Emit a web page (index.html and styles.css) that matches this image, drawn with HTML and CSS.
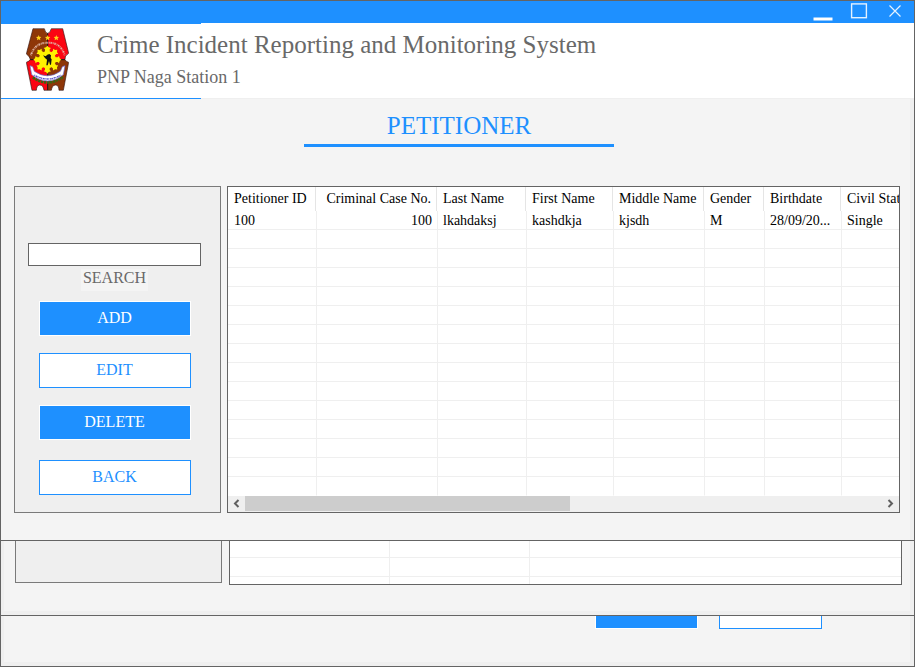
FILE: index.html
```html
<!DOCTYPE html>
<html lang="en">
<head>
<meta charset="utf-8">
<meta name="viewport" content="width=device-width, initial-scale=1">
<title>Crime Incident Reporting and Monitoring System</title>
<link rel="stylesheet" href="styles.css">
</head>
<body>
<div class="window">
  <div class="titlebar">
    <button class="caption" type="button" aria-label="Minimize"><svg width="20" height="20" viewBox="0 0 20 20"><path d="M0.5 18h19" stroke="#fff" stroke-width="3"/></svg></button>
    <button class="caption" type="button" aria-label="Maximize"><svg width="20" height="20" viewBox="0 0 20 20"><rect x="2.6" y="2.9" width="14.8" height="13.8" fill="none" stroke="#e4f2ff" stroke-width="1.4"/></svg></button>
    <button class="caption" type="button" aria-label="Close"><svg width="20" height="20" viewBox="0 0 20 20"><path d="M4.5 4.5l11 11m0-11l-11 11" stroke="#e4f2ff" stroke-width="1.2"/></svg></button>
  </div>

  <header class="header">
    <div class="brand">
      <svg class="logo" viewBox="80 85 129 189" aria-hidden="true">
        <defs>
          <clipPath id="shield"><path d="M101 87H135Q138 101 145 101T156 87H190L208 161Q195 168 197 180Q201 187 208 188L192 272H179Q179 256 168 256Q158 257 156 272H134Q132 256 121 256Q112 257 111 272H98L81 188Q91 185 93 179Q91 169 81 163Z"/></clipPath>
        </defs>
        <g clip-path="url(#shield)">
          <path fill="#8e3608" d="M80 85h65v95H80zM145 180h65v95h-65z"/>
          <path fill="#fb0512" d="M145 85h65v95h-65zM80 180h65v95H80z"/>
          <path d="M145 85v190M80 180h130" stroke="#111" stroke-width="3"/>
          <path d="M101 233Q144 263 190 232" fill="none" stroke="#3b6512" stroke-width="9" stroke-dasharray="7 2"/>
        </g>
        <path d="M101 87H135Q138 101 145 101T156 87H190L208 161Q195 168 197 180Q201 187 208 188L192 272H179Q179 256 168 256Q158 257 156 272H134Q132 256 121 256Q112 257 111 272H98L81 188Q91 185 93 179Q91 169 81 163Z" fill="none" stroke="#3a1712" stroke-width="2"/>
        <path d="M95 167Q105 130 145 129T196 167" fill="none" stroke="#e0b8aa" stroke-width="6" stroke-dasharray="2 2 4 1 1 2"/>
        <g fill="#ffd31a">
          <path id="star" d="M118 106l2 5 6 1-4 4 1 6-5-3-5 3 1-6-4-4 6-1z"/>
          <use href="#star" x="27"/><use href="#star" x="53"/>
        </g>
        <g fill="#fff200">
          <g id="rays"><path id="ray" d="M136 181L137 149L133 145L140 143L144 138L148 143L155 145L151 149L152 181Z"/><use href="#ray" transform="rotate(90 144 180)"/><use href="#ray" transform="rotate(180 144 180)"/><use href="#ray" transform="rotate(270 144 180)"/></g>
          <use href="#rays" transform="rotate(45 144 180)"/>
        </g>
        <circle cx="144" cy="180" r="26" fill="#fff200"/>
        <path d="M144 165l6-2 5 4-1 8 3 4-2 16h-3l-3-11-4 13h-4l2-17-6-5-6-8 8 3z" fill="#111"/>
        <path d="M92 198l8 3 5 14q39 27 78 0l6-14 8-3-5 27q-47 38-95 0z" fill="#fff" stroke="#6664d0" stroke-width="2"/>
        <path d="M105 226q41 24 79 0" fill="none" stroke="#5552c8" stroke-width="4" stroke-dasharray="3 2 5 1"/>
      </svg>
    </div>
    <div class="titles">
      <h1 class="title">Crime Incident Reporting and Monitoring System</h1>
      <p class="station">PNP Naga Station 1</p>
    </div>
  </header>

  <main class="page">
    <h2 class="heading">PETITIONER</h2>
    <div class="content">
      <form class="panel">
        <input class="search" id="search" type="text">
        <label class="search-label" for="search">SEARCH</label>
        <div class="actions">
          <button class="btn btn-solid" type="button">ADD</button>
          <button class="btn" type="button">EDIT</button>
          <button class="btn btn-solid" type="button">DELETE</button>
        </div>
        <button class="btn btn-back" type="button">BACK</button>
      </form>

      <div class="list">
        <table class="grid">
          <colgroup><col class="c-id"><col class="c-case"><col class="c-last"><col class="c-first"><col class="c-middle"><col class="c-gender"><col class="c-birth"><col></colgroup>
          <thead>
            <tr><th>Petitioner ID</th><th class="num">Criminal Case No.</th><th>Last Name</th><th>First Name</th><th>Middle Name</th><th>Gender</th><th>Birthdate</th><th>Civil Status</th></tr>
          </thead>
          <tbody>
            <tr><td>100</td><td class="num">100</td><td>lkahdaksj</td><td>kashdkja</td><td>kjsdh</td><td>M</td><td>28/09/20...</td><td>Single</td></tr>
            <tr><td></td><td></td><td></td><td></td><td></td><td></td><td></td><td></td></tr>
            <tr><td></td><td></td><td></td><td></td><td></td><td></td><td></td><td></td></tr>
            <tr><td></td><td></td><td></td><td></td><td></td><td></td><td></td><td></td></tr>
            <tr><td></td><td></td><td></td><td></td><td></td><td></td><td></td><td></td></tr>
            <tr><td></td><td></td><td></td><td></td><td></td><td></td><td></td><td></td></tr>
            <tr><td></td><td></td><td></td><td></td><td></td><td></td><td></td><td></td></tr>
            <tr><td></td><td></td><td></td><td></td><td></td><td></td><td></td><td></td></tr>
            <tr><td></td><td></td><td></td><td></td><td></td><td></td><td></td><td></td></tr>
            <tr><td></td><td></td><td></td><td></td><td></td><td></td><td></td><td></td></tr>
            <tr><td></td><td></td><td></td><td></td><td></td><td></td><td></td><td></td></tr>
            <tr><td></td><td></td><td></td><td></td><td></td><td></td><td></td><td></td></tr>
            <tr><td></td><td></td><td></td><td></td><td></td><td></td><td></td><td></td></tr>
            <tr><td></td><td></td><td></td><td></td><td></td><td></td><td></td><td></td></tr>
            <tr><td></td><td></td><td></td><td></td><td></td><td></td><td></td><td></td></tr>
          </tbody>
        </table>
        <div class="scrollbar">
          <button class="arrow" type="button" aria-label="Scroll left"><svg width="17" height="16" viewBox="0 0 17 16"><path d="M10.5 4L7 7.5L10.5 11" fill="none" stroke="#606060" stroke-width="2"/></svg></button>
          <div class="track"><div class="thumb"></div></div>
          <button class="arrow" type="button" aria-label="Scroll right"><svg width="17" height="16" viewBox="0 0 17 16"><path d="M6.5 4L10 7.5L6.5 11" fill="none" stroke="#606060" stroke-width="2"/></svg></button>
        </div>
      </div>
    </div>
  </main>

  <section class="behind behind-list">
    <div class="stub-panel"></div>
    <div class="stub-list">
      <div class="stub-row"><span></span><span></span><span></span></div>
      <div class="stub-row"><span></span><span></span><span></span></div>
      <div class="stub-row"><span></span><span></span><span></span></div>
    </div>
  </section>

  <section class="behind behind-buttons">
    <div class="stub-button stub-solid"></div>
    <div class="stub-button"></div>
  </section>
</div>
</body>
</html>
```
FILE: styles.css
```css
:root {
  --blue: #1e90ff;
  --edge: #646464;
  --panel-edge: #7a7a7a;
  --page: #f4f4f4;
  --shade: #efefef;
}

* { box-sizing: border-box; }

body {
  margin: 0;
  font-family: "Liberation Serif", serif;
  color: #000;
}

button {
  margin: 0;
  padding: 0;
  border: 0;
  background: none;
  font: inherit;
}

svg { display: block; }

.window {
  display: flex;
  flex-direction: column;
  min-height: 100vh;
  border: 1px solid var(--edge);
  background: var(--page);
}

/* Title bar */
.titlebar {
  display: flex;
  justify-content: flex-end;
  gap: 16px;
  height: 22px;
  padding-right: 9px;
  background: var(--blue);
}

.caption { width: 20px; height: 20px; }

/* Header */
.header {
  display: flex;
  height: 76px;
  background: #fff;
  box-shadow: inset 0 -1px 0 var(--shade);
}

.brand {
  flex: none;
  width: 200px;
  margin-right: -104px;
  padding: 4px 0 0 25px;
  border-top: 1px solid var(--blue);
  border-bottom: 1px solid var(--blue);
}

.logo { width: 43px; height: 63px; }

.titles {
  flex: 1;
  padding-top: 8px;
}

.title {
  margin: 0 0 8px;
  font-size: 25px;
  font-weight: 400;
  line-height: 28px;
  color: #696969;
}

.station {
  margin: 0;
  font-size: 18px;
  line-height: 20px;
  color: #696969;
}

/* Page */
.page {
  padding: 11px 14px 27px 13px;
  border-bottom: 1px solid var(--edge);
  background: linear-gradient(var(--shade), var(--shade)) right / 4px 100% no-repeat;
}

.heading {
  width: 310px;
  margin: 0 auto 39px 290px;
  padding-bottom: 2px;
  border-bottom: 3px solid var(--blue);
  font-size: 25px;
  font-weight: 400;
  line-height: 32px;
  text-align: center;
  color: var(--blue);
}

.content {
  display: grid;
  grid-template-columns: 207px 1fr;
  gap: 6px;
}

.panel {
  display: flex;
  flex-direction: column;
  align-items: center;
  padding: 56px 19px 17px 13px;
  border: 1px solid var(--panel-edge);
  background: var(--shade);
}

.search {
  width: 100%;
  height: 23px;
  padding: 0 4px;
  border: 1px solid var(--edge);
  background: #fff;
  font: inherit;
}

.search-label {
  width: 67px;
  margin: 3px 0 10px;
  padding-bottom: 4px;
  background: var(--page);
  font-size: 16px;
  line-height: 18px;
  text-align: center;
  color: #696969;
}

.actions {
  display: flex;
  flex-direction: column;
  gap: 17px;
}

.btn {
  width: 152px;
  height: 35px;
  padding-bottom: 2px;
  border: 1px solid var(--blue);
  background: #fff;
  font-size: 16px;
  color: var(--blue);
}

.btn-solid {
  border-color: #fff;
  background: var(--blue);
  color: #fff;
}

.btn-back { margin-top: 20px; }

/* Records */
.list {
  min-width: 0;
  overflow: hidden;
  border: 1px solid var(--edge);
  background: #fff;
}

.grid {
  width: 100%;
  table-layout: fixed;
  border-collapse: separate;
  border-spacing: 0;
  font-size: 14px;
  line-height: 16px;
}

.c-id { width: 88px; }
.c-case { width: 121px; }
.c-last { width: 89px; }
.c-first { width: 87px; }
.c-middle { width: 91px; }
.c-gender { width: 60px; }
.c-birth { width: 77px; }

.grid th,
.grid td {
  overflow: hidden;
  padding: 0 0 0 6px;
  font-weight: 400;
  text-align: left;
  white-space: nowrap;
}

.grid th {
  height: 24px;
  border-right: 1px solid #e5e5e5;
}

.grid th:last-child { border-right: 0; }

.grid td {
  height: 19px;
  padding-top: 2px;
  border-bottom: 1px solid var(--shade);
}

.grid td + td {
  padding-left: 5px;
  border-left: 1px solid var(--shade);
}

.grid tr:last-child td { border-bottom-color: #fff; }

.grid .num { padding-right: 5px; text-align: right; }

.scrollbar {
  display: flex;
  height: 16px;
  background: var(--shade);
}

.arrow { flex: none; width: 17px; }
.track { flex: 1; }

.thumb {
  width: 51%;
  height: 15px;
  background: #cdcdcd;
}

/* Windows lying behind */
.behind {
  display: flex;
  border: solid var(--shade);
  border-width: 0 4px 4px 3px;
}

.behind-list {
  gap: 7px;
  height: 74px;
  padding: 0 8px 0 11px;
}

.stub-panel {
  width: 207px;
  height: 42px;
  border: 1px solid var(--panel-edge);
  border-top: 0;
  background: var(--shade);
}

.stub-list {
  flex: 1;
  height: 44px;
  overflow: hidden;
  border: 1px solid var(--edge);
  border-top: 0;
  background: #fff;
}

.stub-row {
  display: grid;
  grid-template-columns: 159px 140px 1fr;
  height: 19px;
  border-bottom: 1px solid var(--shade);
}

.stub-row:first-child { height: 17px; }
.stub-row span + span { border-left: 1px solid var(--shade); }
.stub-row:last-child { border-bottom: 0; }

.behind-buttons {
  flex: 1;
  justify-content: flex-end;
  gap: 21px;
  padding-right: 88px;
  box-shadow: 0 -1px 0 var(--edge);
  margin-top: 1px;
}

.stub-button {
  width: 103px;
  height: 13px;
  border: 1px solid var(--blue);
  border-top: 0;
  background: #fff;
}

.stub-solid {
  border-color: #fff;
  background: var(--blue);
}
```
